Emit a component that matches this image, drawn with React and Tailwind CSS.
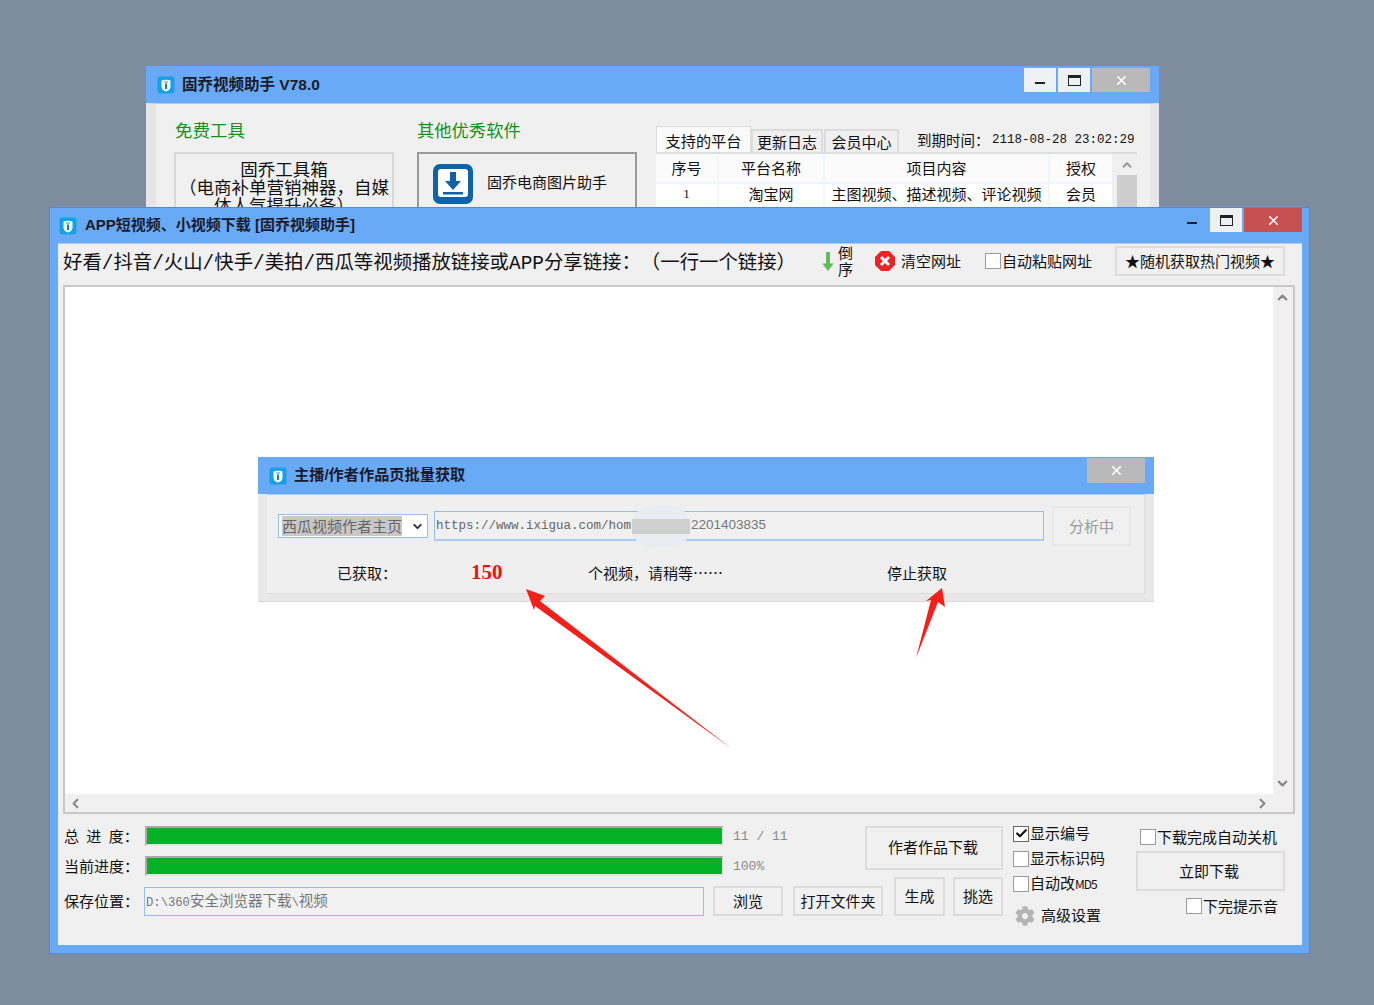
import React from "react";
import { ChevronUp, ChevronDown, ChevronLeft, ChevronRight, Check, X } from "lucide-react";
import { FaCog } from "react-icons/fa";

const Logo = ({ className }) => (
  <svg viewBox="0 0 18 18" className={className}>
    <rect x="0.5" y="0.5" width="17" height="17" rx="2.5" fill="#18a0e6" />
    <path d="M4.5 4.5 Q9 3 13.5 4.5 V11 Q13 14.5 9 15.5 Q5 14.5 4.5 11 Z" fill="#f4fbff" />
    <rect x="8" y="7.5" width="2" height="5.5" fill="#1b78b8" />
    <rect x="7" y="5.4" width="4" height="1.2" fill="#5aa8d8" />
  </svg>
);

const WinBtn = ({ className, children }) => (
  <div className={`flex items-center justify-center h-[24px] ${className}`}>{children}</div>
);
const Restore = () => <div className="w-[13px] h-[11px] border border-[#222] border-t-[3px]" />;
const Dash = () => <div className="w-[10px] h-[2px] bg-[#222] mt-[6px]" />;
const CloseX = () => <X size={15} strokeWidth={2.5} color="#fff" />;

const Box = ({ checked }) => (
  <div className={`w-[16px] h-[16px] shrink-0 bg-white border flex items-center justify-center ${checked ? "border-[#666]" : "border-[#9a9a9a]"}`}>
    {checked && <Check size={13} strokeWidth={4} color="#111" />}
  </div>
);

const Btn = ({ className = "", children }) => (
  <div className={`flex items-center justify-center border-2 border-[#dcdcdc] bg-[#f0f0f0] text-[#111] text-[15px] ${className}`}>{children}</div>
);

const Chk = ({ className = "", checked, children }) => (
  <div className={`flex items-center gap-[1px] text-[15px] text-[#111] whitespace-nowrap ${className}`}>
    <Box checked={checked} />
    <span>{children}</span>
  </div>
);

const mono = "font-['Liberation_Mono','Noto_Sans_CJK_SC',monospace]";

const BackWindow = () => (
  <div className="absolute left-[146px] top-[66px] w-[1013px] h-[150px] bg-[#69aaf6] overflow-hidden">
    <div className="h-[37px] flex items-start justify-between pr-[9px]">
      <div className="flex items-center h-[37px] pl-[11px]">
        <Logo className="w-[18px] h-[18px]" />
        <span className="ml-[7px] font-bold text-[15.5px] text-[#1a1a2a] font-['Liberation_Sans','Noto_Sans_CJK_SC',sans-serif]">固乔视频助手 V78.0</span>
      </div>
      <div className="flex gap-[2px] pt-[2px]">
        <WinBtn className="w-[32px] bg-[#eef0f2]"><Dash /></WinBtn>
        <WinBtn className="w-[32px] bg-[#eef0f2]"><Restore /></WinBtn>
        <WinBtn className="w-[58px] bg-[#b9b9b9]"><CloseX /></WinBtn>
      </div>
    </div>
    <div className="h-[113px] bg-[#f0f0f0] border-l-[10px] border-r-[9px] border-[#e6e6e6] border-t border-t-[#a9cdf8] flex">
      <div className="w-[238px] pl-[18px] shrink-0">
        <div className="text-[#16911b] text-[17.5px] leading-[26px] mt-[13px] pl-[1px]">免费工具</div>
        <div className="w-[220px] mt-[9px] h-[80px] bg-[#f0f0f0] border-2 border-[#d8d8d8] text-center text-[#111] text-[17.5px] leading-[18px] pt-[6px] overflow-hidden">
          固乔工具箱<br />（电商补单营销神器，自媒体人气提升必备）
        </div>
      </div>
      <div className="w-[240px] pl-[23px] shrink-0">
        <div className="text-[#16911b] text-[17.3px] leading-[26px] mt-[13px] whitespace-nowrap">其他优秀软件</div>
        <div className="w-[220px] mt-[9px] h-[80px] bg-[#f0f0f0] border-2 border-[#9a9a9a] flex items-start pl-[14px] pt-[10px]">
          <svg viewBox="0 0 40 40" className="w-[40px] h-[40px] shrink-0">
            <rect width="40" height="40" rx="7" fill="#0d62a8" />
            <rect x="5" y="5" width="30" height="28" rx="3" fill="#fff" />
            <path d="M17 8 h6 v9 h5 l-8 9 l-8 -9 h5 Z" fill="#0d62a8" />
            <rect x="10" y="28" width="20" height="2.5" fill="#0d62a8" />
          </svg>
          <span className="ml-[14px] mt-[7px] text-[15px] text-[#111] whitespace-nowrap">固乔电商图片助手</span>
        </div>
      </div>
      <div className="ml-[22px] w-[481px] shrink-0">
        <div className="flex items-end h-[50px] border-b-2 border-[#dedede]">
          <div className="w-[95px] h-[26px] bg-[#fafafa] border border-b-0 border-[#dcdcdc] text-[15.2px] text-center leading-[27px] text-[#111]">支持的平台</div>
          <div className="w-[72px] h-[23px] bg-[#f0f0f0] border-2 border-b-0 border-[#dcdcdc] text-[15px] text-center leading-[22px] text-[#111]">更新日志</div>
          <div className="w-[75px] h-[23px] ml-[1px] bg-[#f0f0f0] border-2 border-b-0 border-[#dcdcdc] text-[15px] text-center leading-[22px] text-[#111]">会员中心</div>
          <div className="ml-[18px] mb-[1px] flex items-center whitespace-nowrap">
            <span className="text-[14.5px] text-[#111] w-[75px]">到期时间：</span>
            <span className={`text-[12.5px] text-[#111] ${mono}`}>2118-08-28 23:02:29</span>
          </div>
        </div>
        <div className="flex">
          <div className="w-[456px] bg-white">
            <div className="flex h-[30px] bg-[#fbfbfb] border-b-2 border-[#eef5fd] text-[15px] text-[#111] leading-[28px] text-center">
              <div className="w-[63px] border-r-2 border-[#eef5fd]">序号</div>
              <div className="w-[106px] border-r-2 border-[#eef5fd]">平台名称</div>
              <div className="w-[225px] border-r-2 border-[#eef5fd]">项目内容</div>
              <div className="w-[62px]">授权</div>
            </div>
            <div className="flex h-[30px] text-[15px] text-[#111] leading-[20px] text-center">
              <div className="w-[63px] border-r-2 border-[#f5f5f5] text-[13px] font-['Liberation_Serif',serif]">1</div>
              <div className="w-[106px] border-r-2 border-[#f5f5f5]">淘宝网</div>
              <div className="w-[225px] border-r-2 border-[#f5f5f5] whitespace-nowrap">主图视频、描述视频、评论视频</div>
              <div className="w-[62px]">会员</div>
            </div>
          </div>
          <div className="ml-[5px] w-[20px] bg-[#f0f0f0]">
            <div className="h-[21px] flex items-center justify-center"><ChevronUp size={14} strokeWidth={3.5} color="#999" /></div>
            <div className="h-[40px] bg-[#cdcdcd]" />
          </div>
        </div>
      </div>
    </div>
  </div>
);

const Progress = ({ label, tail, spaced }) => (
  <div className="flex items-center h-[20px]">
    <div className={`w-[81px] shrink-0 text-[15px] text-[#111] whitespace-nowrap ${spaced ? "[word-spacing:4px]" : ""}`}>{label}</div>
    <div className="w-[578px] h-[20px] bg-[#07b126] border-t-2 border-l-[2px] border-b-2 border-r border-t-[#a9a9a9] border-l-[#a9a9a9] border-b-[#e4e4e4] border-r-[#e0e0e0]" />
    <div className={`ml-[10px] pt-[2px] text-[13px] text-[#8a8a8a] ${mono}`}>{tail}</div>
  </div>
);

const MainWindow = () => (
  <div className="absolute left-[49px] top-[207px] w-[1261px] h-[747px] bg-[#69aaf6] border border-[#4f8ad4] flex flex-col">
    <div className="h-[35px] shrink-0 flex items-start justify-between pr-[7px]">
      <div className="flex items-center h-[35px] pl-[9px]">
        <Logo className="w-[18px] h-[18px]" />
        <span className="ml-[8px] font-bold text-[15px] text-[#1a1a2a] whitespace-nowrap font-['Liberation_Sans','Noto_Sans_CJK_SC',sans-serif]">APP短视频、小视频下载 [固乔视频助手]</span>
      </div>
      <div className="flex gap-[2px]">
        <WinBtn className="w-[32px]"><Dash /></WinBtn>
        <WinBtn className="w-[32px] bg-[#eef0f2]"><Restore /></WinBtn>
        <WinBtn className="w-[58px] bg-[#c75050]"><CloseX /></WinBtn>
      </div>
    </div>
    <div className="ml-[8px] mr-[7px] mb-[8px] flex-1 bg-[#f0f0f0] border-t border-[#a9cdf8] flex flex-col">
      <div className="h-[41px] shrink-0 flex items-center pl-[5px] pb-[7px]">
        <div className={`w-[758px] shrink-0 mt-[7px] whitespace-nowrap text-[19.4px] text-[#111] [text-spacing-trim:space-all] ${mono}`}>好看/抖音/火山/快手/美拍/西瓜等视频播放链接或APP分享链接：（一行一个链接）</div>
        <svg viewBox="0 0 14 20" className="w-[14px] h-[19px] shrink-0">
          <path d="M5 0 h4 v12 h4 l-6 8 l-6 -8 h4 Z" fill="#5dba5d" />
        </svg>
        <div className="ml-[3px] w-[16px] text-[15px] leading-[16px] text-[#111] shrink-0">倒序</div>
        <svg viewBox="0 0 20 20" className="ml-[21px] w-[20px] h-[20px] shrink-0">
          <path d="M6 0 h8 l6 6 v8 l-6 6 h-8 l-6 -6 v-8 Z" fill="#ec2227" />
          <path d="M6 6 L14 14 M14 6 L6 14" stroke="#fff" strokeWidth="3" />
        </svg>
        <div className="ml-[6px] w-[84px] text-[15px] text-[#111] shrink-0 whitespace-nowrap">清空网址</div>
        <Chk className="shrink-0 w-[130px]">自动粘贴网址</Chk>
        <Btn className="w-[170px] h-[30px] shrink-0 whitespace-nowrap">★随机获取热门视频★</Btn>
      </div>
      <div className="ml-[5px] w-[1232px] h-[529px] shrink-0 bg-white border-2 border-[#c8c8c8] flex flex-col">
        <div className="flex-1 flex min-h-0">
          <div className="flex-1" />
          <div className="w-[20px] bg-[#f0f0f0] flex flex-col items-center justify-between py-[3px] pr-[1px]">
            <ChevronUp size={15} strokeWidth={3.5} color="#888" />
            <ChevronDown size={15} strokeWidth={3.5} color="#888" />
          </div>
        </div>
        <div className="h-[18px] shrink-0 bg-[#f0f0f0] flex items-center justify-between pl-[3px] pr-[23px]">
          <ChevronLeft size={15} strokeWidth={3.5} color="#888" />
          <ChevronRight size={15} strokeWidth={3.5} color="#888" />
        </div>
      </div>
      <div className="flex pt-[12px] pl-[6px]">
        <div className="w-[819px] shrink-0 flex flex-col">
          <Progress label="总 进 度：" tail="11 / 11" spaced />
          <div className="h-[10px]" />
          <Progress label="当前进度：" tail="100%" />
          <div className="h-[10px]" />
          <div className="flex items-center h-[30px]">
            <div className="w-[80px] shrink-0 text-[15px] text-[#111]">保存位置：</div>
            <div className={`w-[560px] h-[29px] shrink-0 bg-[#f2f2f2] border border-[#92c0ee] pl-[1px] leading-[29px] text-[14.5px] text-[#777] ${mono}`}>
              <span className="text-[12.2px]">D:\360</span>安全浏览器下载<span className="text-[12.2px]">\</span>视频
            </div>
            <Btn className="ml-[9px] w-[70px] h-[30px] shrink-0">浏览</Btn>
            <Btn className="ml-[10px] w-[90px] h-[30px] shrink-0">打开文件夹</Btn>
          </div>
        </div>
        <div className="-ml-[18px] w-[138px] shrink-0 flex flex-col">
          <Btn className="h-[44px] pr-[2px] pb-[1px]">作者作品下载</Btn>
          <div className="mt-[7px] flex pl-[29px] gap-[8px]">
            <Btn className="w-[51px] h-[39px]">生成</Btn>
            <Btn className="w-[50px] h-[39px]">挑选</Btn>
          </div>
        </div>
        <div className="ml-[10px] w-[120px] shrink-0 -mt-[5px] flex flex-col">
          <Chk className="h-[25px]" checked>显示编号</Chk>
          <Chk className="h-[25px]">显示标识码</Chk>
          <Chk className="h-[25px]">自动改<span className="text-[12px] tracking-[-1px]">MD5</span></Chk>
          <div className="h-[25px] mt-[7px] flex items-center pl-[2px]">
            <FaCog size={20} color="#b4b4b4" />
            <span className="ml-[6px] text-[15px] text-[#111]">高级设置</span>
          </div>
        </div>
        <div className="ml-[3px] w-[149px] shrink-0 flex flex-col">
          <Chk className="pl-[4px] h-[16px] mt-[3px]">下载完成自动关机</Chk>
          <Btn className="mt-[6px] h-[40px] pr-[3px]">立即下载</Btn>
          <Chk className="pl-[50px] h-[16px] mt-[7px]">下完提示音</Chk>
        </div>
      </div>
    </div>
  </div>
);

const Dialog = () => (
  <div className="absolute left-[258px] top-[457px] w-[896px] h-[145px] bg-[#e8e8e8] border-b border-[#d8d8d8] flex flex-col">
    <div className="h-[37px] shrink-0 bg-[#69aaf6] flex items-start justify-between pr-[9px]">
      <div className="flex items-center h-[37px] pl-[11px]">
        <Logo className="w-[18px] h-[18px]" />
        <span className="ml-[7px] font-bold text-[15.2px] text-[#1a1a2a] whitespace-nowrap font-['Liberation_Sans','Noto_Sans_CJK_SC',sans-serif]">主播/作者作品页批量获取</span>
      </div>
      <WinBtn className="w-[58px] !h-[25px] mt-[1px] bg-[#b9b9b9]"><CloseX /></WinBtn>
    </div>
    <div className="mx-[9px] mb-[7px] flex-1 bg-[#efefef] border-b border-r border-[#dcdcdc] border-t border-t-[#a9cdf8] flex flex-col">
      <div className="flex items-center h-[62px] pl-[11px]">
        <div className="w-[150px] h-[24px] bg-white border border-[#92c0ee] flex items-center pl-[3px] justify-between pr-[3px] shrink-0">
          <span className="bg-[#c8c8c8] text-[#666] text-[15px] leading-[20px] whitespace-nowrap">西瓜视频作者主页</span>
          <ChevronDown size={13} strokeWidth={3.5} color="#333" />
        </div>
        <div className="relative ml-[6px] w-[610px] h-[30px] shrink-0 bg-[#f0f0f0] border border-[#92c0ee] border-b-2 border-b-[#a9cdf8] flex items-center pl-[1px]">
          <span className={`text-[12.5px] text-[#666] w-[255px] pt-[2px] ${mono}`}>https://www.ixigua.com/hom</span>
          <span className="text-[13.5px] text-[#777] font-['Liberation_Sans',sans-serif]">2201403835</span>
          <div className="absolute left-[196px] -top-[6px] w-[60px] h-[41px] rounded-full bg-[#e9edf3] flex items-center justify-center">
            <div className="w-[58px] h-[15px] bg-[#cfcfcf]" />
          </div>
        </div>
        <Btn className="ml-[8px] w-[79px] h-[40px] shrink-0 !border-[#e8e8e8] !text-[#9a9a9a]">分析中</Btn>
      </div>
      <div className="flex items-center h-[32px] text-[15px] text-[#111] pl-[70px]">
        <div className="w-[134px] shrink-0">已获取：</div>
        <div className="w-[117px] shrink-0 text-[#f01010] text-[21px] font-bold font-['Liberation_Serif',serif]">150</div>
        <div className="w-[299px] shrink-0 whitespace-nowrap">个视频，请稍等……</div>
        <div className="shrink-0">停止获取</div>
      </div>
    </div>
  </div>
);

export default function App() {
  return (
    <div className="relative w-[1374px] h-[1005px] overflow-hidden bg-[#7e8ca0] font-['Noto_Sans_CJK_SC',sans-serif]">
      <BackWindow />
      <MainWindow />
      <Dialog />
      <svg viewBox="0 0 1374 1005" className="absolute inset-0 w-[1374px] h-[1005px] pointer-events-none">
        <polygon points="526,589 545,596 540,601 732,749 535,606 534,610" fill="#f5201a" />
        <polygon points="942,588 945,607 938,602 916,658 931,600 926,601" fill="#f5201a" />
      </svg>
    </div>
  );
}
